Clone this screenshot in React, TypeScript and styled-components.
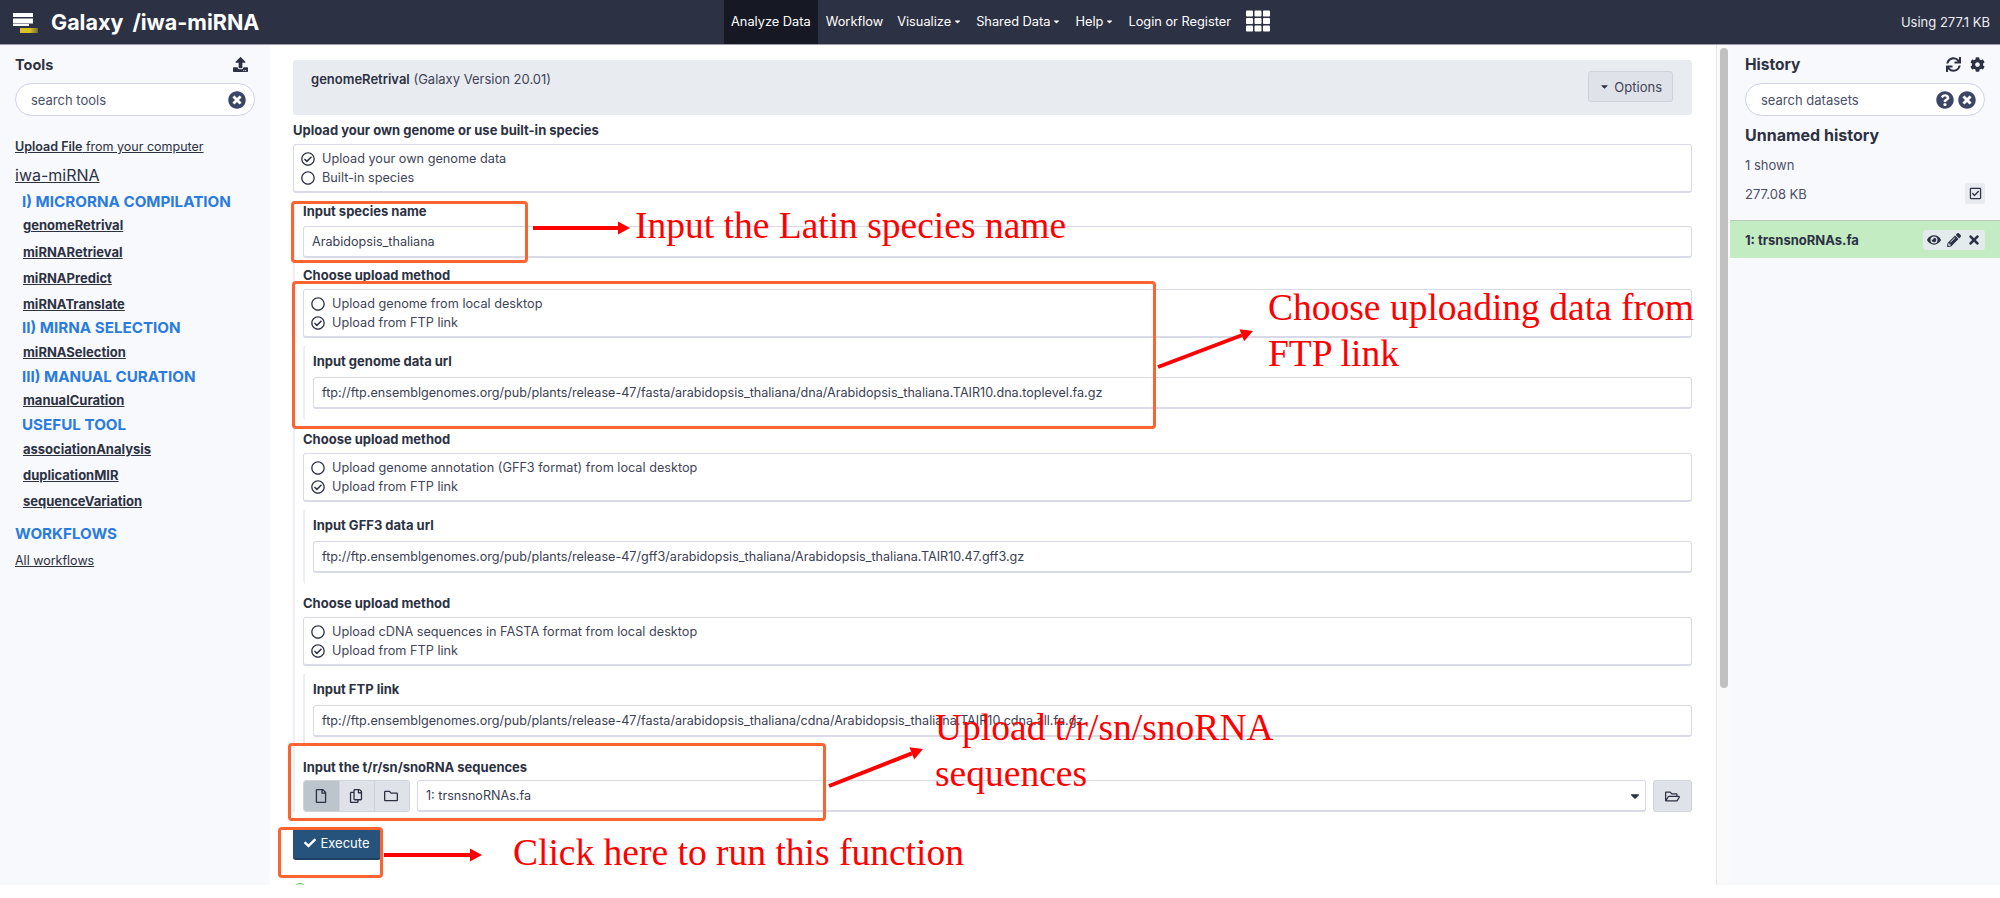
import React from "react";
import styled, { createGlobalStyle } from "styled-components";
import {
    FaCaretDown, FaCheck, FaCog, FaEye, FaPencilAlt, FaQuestionCircle, FaRegCheckCircle, FaRegCheckSquare,
    FaRegCircle, FaRegCopy, FaRegFile, FaRegFolder, FaRegFolderOpen, FaSync, FaTh, FaTimes, FaTimesCircle, FaUpload,
} from "react-icons/fa";

const GlobalStyle = createGlobalStyle`
    html, body {
        margin: 0;
        padding: 0;
        background: #fff;
    }
    * {
        box-sizing: border-box;
    }
`;

const Page = styled.div`
    position: relative;
    width: 2000px;
    height: 885px;
    overflow: hidden;
    font-family: Inter, "Liberation Sans", sans-serif;
    font-size: 13px;
    color: #2c3143;
`;

const Masthead = styled.header`
    height: 45px;
    display: flex;
    align-items: stretch;
    background: #2c3143;
    border-bottom: 1px solid #9a9daa;
    color: #fff;
`;

const Brand = styled.div`
    width: 724px;
    display: flex;
    align-items: center;
    gap: 13px;
    padding-left: 13px;
    font-size: 21.5px;
    font-weight: 700;
    word-spacing: 4px;
    white-space: pre;
`;

const NavItem = styled.div<{ $active?: boolean }>`
    display: flex;
    align-items: center;
    gap: 2px;
    padding: 0 7px 1px;
    margin-right: ${props => props.$active ? "1px" : "0"};
    background: ${props => props.$active ? "#161824" : "transparent"};
    font-size: 12.8px;
    white-space: nowrap;
    svg {
        font-size: 9px;
    }
`;

const GridItem = styled(NavItem)`
    padding: 0 0 2px 8px;
    svg {
        font-size: 24px;
    }
`;

const Quota = styled.div`
    margin-left: auto;
    padding-right: 10px;
    align-self: center;
    font-size: 13px;
    color: #eceef3;
`;

const Body = styled.div`
    height: 840px;
    display: flex;
`;

const SidePanel = styled.aside`
    width: 270px;
    flex: none;
    padding: 0 15px;
    background: #f8f9fc;
`;

const PanelHead = styled.div<{ $size: number }>`
    height: 38px;
    display: flex;
    align-items: center;
    justify-content: space-between;
    font-size: ${props => props.$size}px;
    font-weight: 700;
`;

const HeadIcons = styled.div<{ $inset?: number }>`
    display: flex;
    align-items: center;
    gap: 9px;
    padding-right: ${props => props.$inset || 0}px;
    font-size: 15px;
    color: #2c3143;
`;

const SearchBox = styled.div`
    height: 33px;
    display: flex;
    align-items: center;
    gap: 4px;
    padding: 0 8px 0 15px;
    background: #fff;
    border: 1px solid #cfd2e6;
    border-radius: 17px;
    color: #4a5068;
    span {
        flex: 1;
    }
    svg {
        font-size: 18px;
        color: #3b4566;
    }
`;

const LinkRow = styled.div<{ $gap: number }>`
    height: 20px;
    line-height: 20px;
    margin-top: ${props => props.$gap}px;
    white-space: nowrap;
`;

const PlainLink = styled(LinkRow)`
    text-decoration: underline;
    font-size: 12.5px;
    b {
        font-weight: 600;
    }
`;

const ToolboxTitle = styled(LinkRow)`
    font-size: 16px;
    text-decoration: underline;
`;

const ToolHeading = styled(LinkRow)<{ $inset?: boolean }>`
    padding-left: ${props => props.$inset ? "7px" : "0"};
    font-size: 15.2px;
    font-weight: 700;
    color: #2a7be0;
`;

const ToolLink = styled(LinkRow)`
    padding-left: 8px;
    font-size: 13px;
    font-weight: 700;
    text-decoration: underline;
`;

const Center = styled.main`
    width: 1446px;
    flex: none;
    padding: 15px 24px 0 23px;
    overflow: hidden;
`;

const ToolCard = styled.div`
    height: 55px;
    display: flex;
    justify-content: space-between;
    padding: 11px 19px 0 18px;
    background: #e8ebf0;
    border-radius: 3px;
    color: #3f4558;
    b {
        color: #2c3143;
        font-weight: 600;
    }
`;

const OptionsButton = styled.div`
    height: 31px;
    display: flex;
    align-items: center;
    gap: 4px;
    padding: 0 10px;
    background: #dfe2e8;
    border: 1px solid #cfd2dc;
    border-radius: 3px;
    svg {
        font-size: 11px;
        color: #2c3143;
    }
`;

const FieldLabel = styled.div<{ $gap: number }>`
    height: 18px;
    line-height: 20px;
    margin-top: ${props => props.$gap}px;
    font-weight: 700;
    white-space: nowrap;
`;

const RadioBox = styled.div`
    height: 49px;
    margin-top: 6px;
    padding: 4px 7px;
    background: #fff;
    border: 1px solid #d8dae8;
    border-bottom-width: 2px;
    border-radius: 3px;
`;

const RadioRow = styled.div`
    height: 19px;
    display: flex;
    align-items: center;
    gap: 7px;
    font-size: 12.7px;
    color: #3f4558;
    svg {
        font-size: 14px;
        color: #2c3143;
    }
`;

const Nested = styled.div`
    border-left: 2px solid #eceef3;
    padding-left: 8px;
`;

const Conditional = styled(Nested)`
    margin-top: 7px;
    padding-top: 6px;
    padding-bottom: 11px;
    border-radius: 4px;
`;

const TextInput = styled.div<{ $gap: number }>`
    height: 32px;
    line-height: 29px;
    margin-top: ${props => props.$gap}px;
    padding: 0 8px;
    background: #fff;
    border: 1px solid #d8dae8;
    border-bottom-width: 2px;
    border-radius: 3px;
    font-size: 12.6px;
    color: #3a4053;
    white-space: nowrap;
    overflow: hidden;
`;

const SelectRow = styled.div`
    height: 32px;
    margin-top: 5px;
    display: flex;
    gap: 7px;
`;

const ButtonGroup = styled.div`
    display: flex;
    border: 1px solid #cfd2dc;
    border-radius: 3px;
    overflow: hidden;
`;

const GroupButton = styled.div<{ $active?: boolean }>`
    width: 35px;
    padding-right: 2px;
    display: flex;
    align-items: center;
    justify-content: center;
    background: ${props => props.$active ? "#bcc4cc" : "#dfe2e8"};
    border-left: ${props => props.$active ? "none" : "1px solid #cfd2dc"};
    font-size: 14px;
`;

const SelectBox = styled.div`
    flex: 1;
    display: flex;
    align-items: center;
    justify-content: space-between;
    padding: 0 3px 0 8px;
    background: #fff;
    border: 1px solid #d8dae8;
    border-bottom-width: 2px;
    border-radius: 3px;
    font-size: 12.6px;
    color: #3a4053;
    svg {
        font-size: 14px;
        color: #2c3143;
    }
`;

const BrowseButton = styled(GroupButton)`
    width: 39px;
    padding-right: 0;
    border: 1px solid #cfd2dc;
    border-radius: 3px;
    font-size: 15px;
`;

const ExecuteButton = styled.div`
    width: 88px;
    height: 32px;
    margin-top: 16px;
    display: flex;
    align-items: center;
    justify-content: center;
    gap: 4px;
    background: #25537b;
    border-bottom: 2px solid #1c4163;
    border-radius: 3px;
    color: #fff;
    font-size: 13px;
`;

const NextToggle = styled.div`
    width: 12px;
    height: 12px;
    margin: 23px 0 0 1px;
    border: 1.5px solid #44cc44;
    border-radius: 50%;
`;

const Gutter = styled.div`
    width: 14px;
    flex: none;
    padding: 3px 3px 0;
    background: #fafafa;
    border-left: 1px solid #e8e8ea;
`;

const ScrollThumb = styled.div`
    width: 8px;
    height: 640px;
    background: #c1c1c1;
    border-radius: 4px;
`;

const HistoryName = styled.div`
    margin-top: 9px;
    height: 20px;
    line-height: 20px;
    font-size: 16px;
    font-weight: 700;
    white-space: nowrap;
`;

const HistoryMeta = styled.div<{ $gap: number }>`
    height: 21px;
    margin-top: ${props => props.$gap}px;
    display: flex;
    align-items: center;
    justify-content: space-between;
    color: #4a5068;
`;

const CheckButton = styled.div`
    width: 20px;
    height: 21px;
    display: flex;
    align-items: center;
    justify-content: center;
    background: #e8ebf0;
    border-radius: 2px;
    font-size: 13px;
    color: #2c3143;
`;

const HistoryPanel = styled(SidePanel)`
    flex: 1;
    padding: 0;
`;

const HistoryTop = styled.div`
    padding: 0 15px;
    height: 175px;
`;

const DatasetRow = styled.div`
    height: 38px;
    display: flex;
    align-items: center;
    justify-content: space-between;
    padding: 0 15px;
    background: #c3ecc3;
    border-top: 1px solid #b9c8c0;
    font-weight: 700;
`;

const DatasetActions = styled.div`
    width: 62px;
    height: 20px;
    display: flex;
    align-items: center;
    justify-content: space-between;
    padding: 0 4px;
    background: #e4ebec;
    border-radius: 3px;
    font-size: 14px;
`;

const Callout = styled.div<{ $x: number; $y: number; $w: number; $h: number }>`
    position: absolute;
    left: ${props => props.$x}px;
    top: ${props => props.$y}px;
    width: ${props => props.$w}px;
    height: ${props => props.$h}px;
    border: 3px solid #fb6430;
    border-radius: 4px;
`;

const Note = styled.div<{ $x: number; $y: number }>`
    position: absolute;
    left: ${props => props.$x}px;
    top: ${props => props.$y}px;
    font-family: "Liberation Serif", "Times New Roman", serif;
    font-size: 37.5px;
    line-height: 46px;
    color: #f00;
    white-space: pre;
`;

const ArrowLayer = styled.svg`
    position: absolute;
    left: 0;
    top: 0;
    pointer-events: none;
`;

const GalaxyLogo = () => (
    <svg width="25" height="22" viewBox="0 0 25 22">
        <defs>
            <linearGradient id="logoFade" x1="0" x2="1" y1="0" y2="0">
                <stop offset="0.55" stopColor="#d9c224" />
                <stop offset="1" stopColor="#6f6a3a" />
            </linearGradient>
        </defs>
        <rect x="0" y="2" width="20" height="4" fill="#fff" />
        <rect x="0" y="7.5" width="20" height="5" fill="#fff" />
        <rect x="0" y="13" width="16" height="2" fill="#fff" />
        <rect x="7" y="17" width="18" height="5" fill="url(#logoFade)" />
    </svg>
);

const Radio = ({ checked, label }: { checked?: boolean; label: string }) => (
    <RadioRow>
        {checked ? <FaRegCheckCircle /> : <FaRegCircle />}
        <span>{label}</span>
    </RadioRow>
);

const sidebar = [
    { kind: "heading", label: "I) MICRORNA COMPILATION", gap: 7 },
    { kind: "tool", label: "genomeRetrival", gap: 3 },
    { kind: "tool", label: "miRNARetrieval", gap: 7 },
    { kind: "tool", label: "miRNAPredict", gap: 6 },
    { kind: "tool", label: "miRNATranslate", gap: 6 },
    { kind: "heading", label: "II) MIRNA SELECTION", gap: 4 },
    { kind: "tool", label: "miRNASelection", gap: 4 },
    { kind: "heading", label: "III) MANUAL CURATION", gap: 5 },
    { kind: "tool", label: "manualCuration", gap: 3 },
    { kind: "heading", label: "USEFUL TOOL", gap: 5 },
    { kind: "tool", label: "associationAnalysis", gap: 4 },
    { kind: "tool", label: "duplicationMIR", gap: 6 },
    { kind: "tool", label: "sequenceVariation", gap: 6 },
];

const uploads = [
    {
        annotation: "Upload genome annotation (GFF3 format) from local desktop",
        title: "Input GFF3 data url",
        url: "ftp://ftp.ensemblgenomes.org/pub/plants/release-47/gff3/arabidopsis_thaliana/Arabidopsis_thaliana.TAIR10.47.gff3.gz",
    },
    {
        annotation: "Upload cDNA sequences in FASTA format from local desktop",
        title: "Input FTP link",
        url: "ftp://ftp.ensemblgenomes.org/pub/plants/release-47/fasta/arabidopsis_thaliana/cdna/Arabidopsis_thaliana.TAIR10.cdna.all.fa.gz",
    },
];

const arrows = [
    [533, 228, 630, 228],
    [1158, 367, 1253, 331],
    [829, 786, 923, 749],
    [384, 855, 482, 855],
];

const ArrowLine = ({ line }: { line: number[] }) => {
    const [x1, y1, x2, y2] = line;
    const angle = Math.atan2(y2 - y1, x2 - x1);
    const len = 12;
    const wing = 6.5;
    const bx = x2 - len * Math.cos(angle);
    const by = y2 - len * Math.sin(angle);
    const px = wing * Math.sin(angle);
    const py = wing * Math.cos(angle);
    return (
        <g fill="#f00" stroke="#f00">
            <line x1={x1} y1={y1} x2={bx} y2={by} strokeWidth="4" />
            <polygon points={`${x2},${y2} ${bx + px},${by - py} ${bx - px},${by + py}`} strokeWidth="0" />
        </g>
    );
};

export default function App() {
    return (
        <Page>
            <GlobalStyle />
            <Masthead>
                <Brand><GalaxyLogo />Galaxy /iwa-miRNA</Brand>
                <NavItem $active>Analyze Data</NavItem>
                <NavItem>Workflow</NavItem>
                <NavItem>Visualize <FaCaretDown /></NavItem>
                <NavItem>Shared Data <FaCaretDown /></NavItem>
                <NavItem>Help <FaCaretDown /></NavItem>
                <NavItem>Login or Register</NavItem>
                <GridItem><FaTh /></GridItem>
                <Quota>Using 277.1 KB</Quota>
            </Masthead>
            <Body>
                <SidePanel>
                    <PanelHead $size={14.5}>Tools<HeadIcons $inset={7}><FaUpload /></HeadIcons></PanelHead>
                    <SearchBox><span>search tools</span><FaTimesCircle /></SearchBox>
                    <PlainLink $gap={21}><b>Upload File</b> from your computer</PlainLink>
                    <ToolboxTitle $gap={8}>iwa-miRNA</ToolboxTitle>
                    {sidebar.map(item => item.kind === "heading"
                        ? <ToolHeading key={item.label} $gap={item.gap} $inset>{item.label}</ToolHeading>
                        : <ToolLink key={item.label} $gap={item.gap}>{item.label}</ToolLink>)}
                    <ToolHeading $gap={13}>WORKFLOWS</ToolHeading>
                    <PlainLink $gap={7}>All workflows</PlainLink>
                </SidePanel>
                <Center>
                    <ToolCard>
                        <div><b>genomeRetrival</b> (Galaxy Version 20.01)</div>
                        <OptionsButton><FaCaretDown /> Options</OptionsButton>
                    </ToolCard>
                    <FieldLabel $gap={5}>Upload your own genome or use built-in species</FieldLabel>
                    <RadioBox>
                        <Radio checked label="Upload your own genome data" />
                        <Radio label="Built-in species" />
                    </RadioBox>
                    <Nested>
                        <FieldLabel $gap={8}>Input species name</FieldLabel>
                        <TextInput $gap={7}>Arabidopsis_thaliana</TextInput>
                        <FieldLabel $gap={7}>Choose upload method</FieldLabel>
                        <RadioBox>
                            <Radio label="Upload genome from local desktop" />
                            <Radio checked label="Upload from FTP link" />
                        </RadioBox>
                        <Conditional>
                            <FieldLabel $gap={0}>Input genome data url</FieldLabel>
                            <TextInput $gap={8}>ftp://ftp.ensemblgenomes.org/pub/plants/release-47/fasta/arabidopsis_thaliana/dna/Arabidopsis_thaliana.TAIR10.dna.toplevel.fa.gz</TextInput>
                        </Conditional>
                        {uploads.map(upload => (
                            <React.Fragment key={upload.title}>
                                <FieldLabel $gap={9}>Choose upload method</FieldLabel>
                                <RadioBox>
                                    <Radio label={upload.annotation} />
                                    <Radio checked label="Upload from FTP link" />
                                </RadioBox>
                                <Conditional>
                                    <FieldLabel $gap={0}>{upload.title}</FieldLabel>
                                    <TextInput $gap={8}>{upload.url}</TextInput>
                                </Conditional>
                            </React.Fragment>
                        ))}
                        <FieldLabel $gap={9}>Input the t/r/sn/snoRNA sequences</FieldLabel>
                        <SelectRow>
                            <ButtonGroup>
                                <GroupButton $active><FaRegFile /></GroupButton>
                                <GroupButton><FaRegCopy /></GroupButton>
                                <GroupButton><FaRegFolder /></GroupButton>
                            </ButtonGroup>
                            <SelectBox>1: trsnsnoRNAs.fa<FaCaretDown /></SelectBox>
                            <BrowseButton><FaRegFolderOpen /></BrowseButton>
                        </SelectRow>
                    </Nested>
                    <ExecuteButton><FaCheck size={12} /> Execute</ExecuteButton>
                    <NextToggle />
                </Center>
                <Gutter><ScrollThumb /></Gutter>
                <HistoryPanel>
                    <HistoryTop>
                        <PanelHead $size={15.5}>History<HeadIcons><FaSync /><FaCog /></HeadIcons></PanelHead>
                        <SearchBox>
                            <span>search datasets</span>
                            <FaQuestionCircle />
                            <FaTimesCircle />
                        </SearchBox>
                        <HistoryName>Unnamed history</HistoryName>
                        <HistoryMeta $gap={9}>1 shown</HistoryMeta>
                        <HistoryMeta $gap={8}>277.08 KB<CheckButton><FaRegCheckSquare /></CheckButton></HistoryMeta>
                    </HistoryTop>
                    <DatasetRow>
                        1: trsnsnoRNAs.fa
                        <DatasetActions><FaEye /><FaPencilAlt /><FaTimes /></DatasetActions>
                    </DatasetRow>
                </HistoryPanel>
            </Body>

            <Callout $x={291} $y={201} $w={237} $h={62} />
            <Callout $x={292} $y={281} $w={864} $h={148} />
            <Callout $x={288} $y={743} $w={538} $h={78} />
            <Callout $x={278} $y={827} $w={105} $h={51} />
            <ArrowLayer width="2000" height="885">
                {arrows.map(line => <ArrowLine key={line.join()} line={line} />)}
            </ArrowLayer>
            <Note $x={635} $y={203}>Input the Latin species name</Note>
            <Note $x={1268} $y={285}>{"Choose uploading data from\nFTP link"}</Note>
            <Note $x={935} $y={705}>{"Upload t/r/sn/snoRNA\nsequences"}</Note>
            <Note $x={513} $y={830}>Click here to run this function</Note>
        </Page>
    );
}
